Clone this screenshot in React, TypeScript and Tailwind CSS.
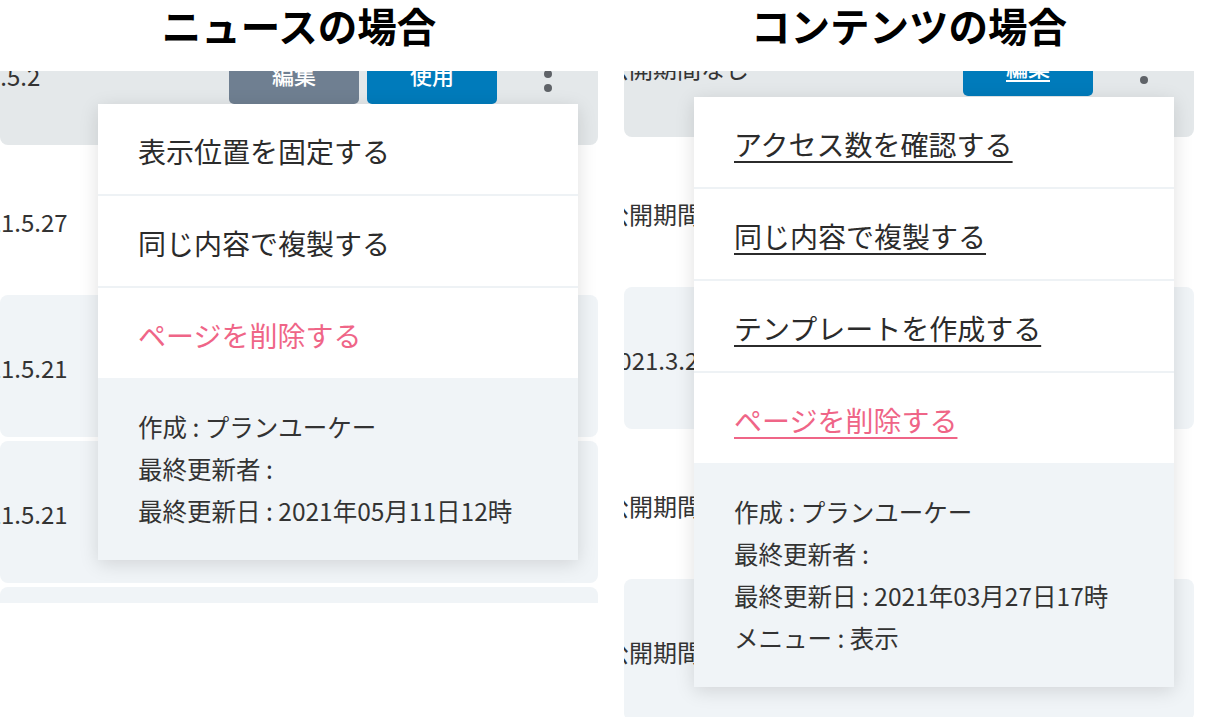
import type { ReactNode } from "react";

type Row = { text: string; shade: "hover" | "tint" | "white"; offset: string };

const newsRows: Row[] = [
  { text: "2021.5.27", shade: "white", offset: "-ml-[39px]" },
  { text: "2021.5.21", shade: "tint", offset: "-ml-[39px]" },
  { text: "2021.5.21", shade: "tint", offset: "-ml-[39px]" },
  { text: "2021.5.20", shade: "tint", offset: "-ml-[39px]" }
];

const contentRows: Row[] = [
  { text: "公開期間なし", shade: "white", offset: "-ml-[19px]" },
  { text: "2021.3.27", shade: "tint", offset: "-ml-[19px]" },
  { text: "公開期間なし", shade: "white", offset: "-ml-[19px]" },
  { text: "公開期間なし", shade: "tint", offset: "-ml-[19px]" }
];

function Kebab() {
  return (
    <div className="flex w-[101px] flex-col items-center gap-[6px]">
      <span className="h-[8px] w-[8px] rounded-full bg-[#5f6368]" />
      <span className="h-[8px] w-[8px] rounded-full bg-[#5f6368]" />
      <span className="h-[8px] w-[8px] rounded-full bg-[#5f6368]" />
    </div>
  );
}

function ListRow({ row }: { row: Row }) {
  const bg = row.shade === "tint" ? "bg-[#f0f4f7]" : "bg-white";
  return (
    <div className={`flex h-[142px] shrink-0 items-center rounded-lg ${bg}`}>
      <span className={`whitespace-nowrap pt-[3px] text-[24px] text-[#333] ${row.offset}`}>{row.text}</span>
    </div>
  );
}

function Menu({
  items,
  meta,
  underline,
  top
}: {
  items: string[];
  meta: string[];
  underline?: boolean;
  top: string;
}) {
  const deco = underline ? "underline decoration-2 underline-offset-[5px]" : "";
  return (
    <div className={`absolute right-[20px] z-10 w-[480px] bg-white shadow-[0_4px_18px_rgba(0,0,0,0.13)] ${top}`}>
      {items.map((item, i) => {
        const last = i === items.length - 1;
        return (
          <div
            key={item}
            className={`flex items-center pl-[40px] text-[28px] ${
              last ? "h-[90px] text-[#ef6587]" : "h-[92px] border-b-2 border-[#eef2f5] text-[#2b2b2b]"
            }`}
          >
            <span className={`pt-[3px] ${deco}`}>{item}</span>
          </div>
        );
      })}
      <div className="bg-[#f0f4f7] px-[40px] py-[28px] text-[24.5px] leading-[42px] text-[#333]">
        {meta.map((line) => (
          <div key={line}>{line}</div>
        ))}
      </div>
    </div>
  );
}

function Column({ title, width, children }: { title: string; width: string; children: ReactNode }) {
  return (
    <div className={`flex shrink-0 flex-col ${width}`}>
      <div className="h-[71px] pt-[3px] text-center text-[39.5px] font-bold leading-[44px] text-black">{title}</div>
      {children}
    </div>
  );
}

export default function App() {
  return (
    <div className="flex h-[717px] w-[1206px] overflow-hidden bg-white font-['Noto_Sans_CJK_JP','Noto_Sans',sans-serif]">
      <Column title="ニュースの場合" width="w-[598px]">
        <div className="relative h-[532px] overflow-hidden">
          <div className="-mt-[68px] flex flex-col gap-[4px]">
            <div className="flex h-[142px] shrink-0 items-center rounded-lg bg-[#e4e8ea]">
              <span className="-ml-[53px] whitespace-nowrap pt-[3px] text-[24px] text-[#333]">2021.5.2</span>
              <div className="flex-1" />
              <div className="flex gap-[8px]">
                <div className="flex h-[60px] w-[130px] items-center justify-center rounded-[5px] bg-[#6f7f91] text-[22px] font-medium text-white">
                  編集
                </div>
                <div className="flex h-[60px] w-[130px] items-center justify-center rounded-[5px] bg-[#007bbb] text-[22px] font-medium text-white">
                  使用
                </div>
              </div>
              <Kebab />
            </div>
            {newsRows.map((row, i) => (
              <ListRow key={i} row={row} />
            ))}
          </div>
          <Menu
            top="top-[33px]"
            items={["表示位置を固定する", "同じ内容で複製する", "ページを削除する"]}
            meta={["作成 : プランユーケー", "最終更新者 :", "最終更新日 : 2021年05月11日12時"]}
          />
        </div>
      </Column>

      <div className="w-[26px] shrink-0" />

      <Column title="コンテンツの場合" width="w-[570px]">
        <div className="relative h-[646px] overflow-hidden">
          <div className="-mt-[76px] flex flex-col gap-[4px]">
            <div className="flex h-[142px] shrink-0 items-center rounded-lg bg-[#e4e8ea]">
              <span className="-ml-[19px] whitespace-nowrap pt-[3px] text-[24px] text-[#333]">公開期間なし</span>
              <div className="flex-1" />
              <div className="flex h-[60px] w-[130px] items-center justify-center rounded-[5px] bg-[#007bbb] text-[22px] font-medium text-white">
                <span className="underline decoration-2 underline-offset-[4px]">編集</span>
              </div>
              <Kebab />
            </div>
            {contentRows.map((row, i) => (
              <ListRow key={i} row={row} />
            ))}
          </div>
          <Menu
            top="top-[26px]"
            underline
            items={["アクセス数を確認する", "同じ内容で複製する", "テンプレートを作成する", "ページを削除する"]}
            meta={["作成 : プランユーケー", "最終更新者 :", "最終更新日 : 2021年03月27日17時", "メニュー : 表示"]}
          />
        </div>
      </Column>
    </div>
  );
}
